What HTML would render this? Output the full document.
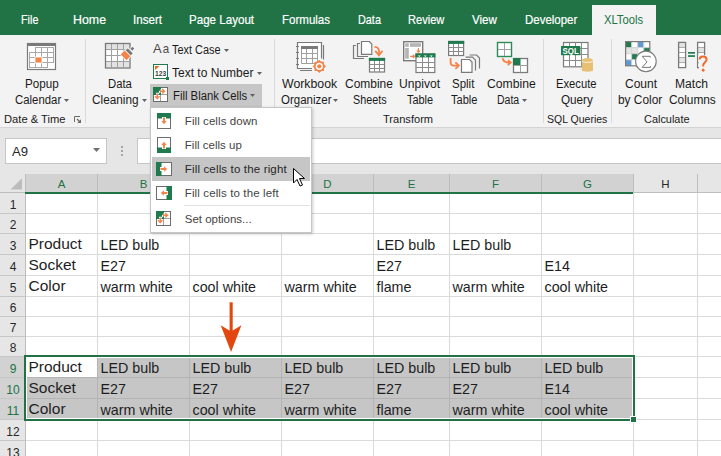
<!DOCTYPE html><html><head><meta charset="utf-8"><style>
html,body{margin:0;padding:0;width:721px;height:456px;overflow:hidden;background:#fff}
.b{position:absolute;box-sizing:content-box}
.t{position:absolute;font-family:"Liberation Sans",sans-serif;white-space:nowrap;transform-origin:0 0}
</style></head><body>
<div class="b" style="left:0;top:0;width:721px;height:35px;background:#217346"></div>
<div class="b" style="left:592px;top:5px;width:64px;height:30px;background:#f3f3f3"></div>
<div class="t" style="left:20.70px;top:13px;font-size:13.5px;line-height:13.5px;color:#ffffff;transform:scaleX(0.8000);-webkit-text-stroke:0.2px currentColor;">File</div>
<div class="t" style="left:73.00px;top:13px;font-size:13.5px;line-height:13.5px;color:#ffffff;transform:scaleX(0.9167);-webkit-text-stroke:0.2px currentColor;">Home</div>
<div class="t" style="left:133.00px;top:13px;font-size:13.5px;line-height:13.5px;color:#ffffff;transform:scaleX(0.8593);-webkit-text-stroke:0.2px currentColor;">Insert</div>
<div class="t" style="left:189.00px;top:13px;font-size:13.5px;line-height:13.5px;color:#ffffff;transform:scaleX(0.8581);-webkit-text-stroke:0.2px currentColor;">Page Layout</div>
<div class="t" style="left:282.00px;top:13px;font-size:13.5px;line-height:13.5px;color:#ffffff;transform:scaleX(0.8533);-webkit-text-stroke:0.2px currentColor;">Formulas</div>
<div class="t" style="left:358.00px;top:13px;font-size:13.5px;line-height:13.5px;color:#ffffff;transform:scaleX(0.8035);-webkit-text-stroke:0.2px currentColor;">Data</div>
<div class="t" style="left:408.40px;top:13px;font-size:13.5px;line-height:13.5px;color:#ffffff;transform:scaleX(0.8203);-webkit-text-stroke:0.2px currentColor;">Review</div>
<div class="t" style="left:472.00px;top:13px;font-size:13.5px;line-height:13.5px;color:#ffffff;transform:scaleX(0.8584);-webkit-text-stroke:0.2px currentColor;">View</div>
<div class="t" style="left:524.70px;top:13px;font-size:13.5px;line-height:13.5px;color:#ffffff;transform:scaleX(0.8504);-webkit-text-stroke:0.2px currentColor;">Developer</div>
<div class="t" style="left:604.00px;top:13px;font-size:13.5px;line-height:13.5px;color:#217346;transform:scaleX(0.8298);">XLTools</div>
<div class="b" style="left:0;top:35px;width:721px;height:92px;background:#f3f3f3"></div>
<div class="b" style="left:85px;top:39px;width:1px;height:84px;background:#dadada"></div>
<div class="b" style="left:274px;top:39px;width:1px;height:84px;background:#dadada"></div>
<div class="b" style="left:543px;top:39px;width:1px;height:84px;background:#dadada"></div>
<div class="b" style="left:611px;top:39px;width:1px;height:84px;background:#dadada"></div>
<div class="b" style="left:150px;top:84px;width:112px;height:23px;background:#c6c6c6"></div>
<div class="t" style="left:24.60px;top:78px;font-size:12.5px;line-height:12.5px;color:#1a1a1a;transform:scaleX(0.9329);">Popup</div>
<div class="t" style="left:14.60px;top:94px;font-size:12.5px;line-height:12.5px;color:#1a1a1a;transform:scaleX(0.9103);">Calendar</div>
<div class="t" style="left:108.00px;top:78px;font-size:12.5px;line-height:12.5px;color:#1a1a1a;transform:scaleX(0.9057);">Data</div>
<div class="t" style="left:92.40px;top:94px;font-size:12.5px;line-height:12.5px;color:#1a1a1a;transform:scaleX(0.9438);">Cleaning</div>
<div class="t" style="left:172.30px;top:44px;font-size:12.5px;line-height:12.5px;color:#1a1a1a;transform:scaleX(0.8719);">Text Case</div>
<div class="t" style="left:172.30px;top:67px;font-size:12.5px;line-height:12.5px;color:#1a1a1a;transform:scaleX(0.9605);">Text to Number</div>
<div class="t" style="left:172.70px;top:90px;font-size:12.5px;line-height:12.5px;color:#1a1a1a;transform:scaleX(0.9049);">Fill Blank Cells</div>
<div class="t" style="left:282.00px;top:78px;font-size:12.5px;line-height:12.5px;color:#1a1a1a;transform:scaleX(0.9835);">Workbook</div>
<div class="t" style="left:280.50px;top:94px;font-size:12.5px;line-height:12.5px;color:#1a1a1a;transform:scaleX(0.9203);">Organizer</div>
<div class="t" style="left:344.60px;top:78px;font-size:12.5px;line-height:12.5px;color:#1a1a1a;transform:scaleX(0.9580);">Combine</div>
<div class="t" style="left:352.50px;top:94px;font-size:12.5px;line-height:12.5px;color:#1a1a1a;transform:scaleX(0.8617);">Sheets</div>
<div class="t" style="left:399.00px;top:78px;font-size:12.5px;line-height:12.5px;color:#1a1a1a;transform:scaleX(0.9676);">Unpivot</div>
<div class="t" style="left:407.00px;top:94px;font-size:12.5px;line-height:12.5px;color:#1a1a1a;transform:scaleX(0.8736);">Table</div>
<div class="t" style="left:452.40px;top:78px;font-size:12.5px;line-height:12.5px;color:#1a1a1a;transform:scaleX(0.9190);">Split</div>
<div class="t" style="left:451.00px;top:94px;font-size:12.5px;line-height:12.5px;color:#1a1a1a;transform:scaleX(0.8837);">Table</div>
<div class="t" style="left:487.40px;top:78px;font-size:12.5px;line-height:12.5px;color:#1a1a1a;transform:scaleX(0.9760);">Combine</div>
<div class="t" style="left:496.70px;top:94px;font-size:12.5px;line-height:12.5px;color:#1a1a1a;transform:scaleX(0.8415);">Data</div>
<div class="t" style="left:556.00px;top:78px;font-size:12.5px;line-height:12.5px;color:#1a1a1a;transform:scaleX(0.8975);">Execute</div>
<div class="t" style="left:561.00px;top:94px;font-size:12.5px;line-height:12.5px;color:#1a1a1a;transform:scaleX(0.9353);">Query</div>
<div class="t" style="left:624.60px;top:78px;font-size:12.5px;line-height:12.5px;color:#1a1a1a;transform:scaleX(0.9618);">Count</div>
<div class="t" style="left:618.30px;top:94px;font-size:12.5px;line-height:12.5px;color:#1a1a1a;transform:scaleX(0.9505);">by Color</div>
<div class="t" style="left:675.40px;top:78px;font-size:12.5px;line-height:12.5px;color:#1a1a1a;transform:scaleX(0.9676);">Match</div>
<div class="t" style="left:668.75px;top:94px;font-size:12.5px;line-height:12.5px;color:#1a1a1a;transform:scaleX(0.9489);">Columns</div>
<div class="t" style="left:3.75px;top:114px;font-size:11.5px;line-height:11.5px;color:#1a1a1a;transform:scaleX(0.9715);">Date &amp; Time</div>
<div class="t" style="left:383.30px;top:114px;font-size:11.5px;line-height:11.5px;color:#1a1a1a;transform:scaleX(0.9635);">Transform</div>
<div class="t" style="left:547.00px;top:114px;font-size:11.5px;line-height:11.5px;color:#1a1a1a;transform:scaleX(0.9136);">SQL Queries</div>
<div class="t" style="left:644.40px;top:114px;font-size:11.5px;line-height:11.5px;color:#1a1a1a;transform:scaleX(0.9500);">Calculate</div>
<svg class="b" style="left:0;top:0" width="721" height="130"><rect x="27.5" y="43.5" width="28" height="26" fill="#fff" stroke="#7a7a7a" stroke-width="1.2"/><rect x="27" y="43" width="29" height="3" fill="#7a7a7a"/><path d="M35 47.5H54 M29 52.5H54 M29 57.5H54 M29 62.5H54 M29 67.5H48 M29.5 52V68 M35.5 47V68 M41.5 47V68 M47.5 47V68 M53.5 47V63" stroke="#a8a8a8" stroke-width="1" fill="none"/><rect x="35" y="57" width="7" height="6" fill="#f4844a" stroke="#fff" stroke-width="0.8"/><rect x="105.5" y="43.5" width="24" height="6" fill="#e2e2e2"/><rect x="105.5" y="61.5" width="24" height="6" fill="#e2e2e2"/><rect x="105.5" y="49.5" width="24" height="12" fill="#fff"/><path d="M111.5 44V67 M117.5 44V67 M123.5 44V67 M106 49.5H129 M106 55.5H129 M106 61.5H129" stroke="#a0a0a0" stroke-width="1" fill="none"/><rect x="105.5" y="43.5" width="24.5" height="24.5" fill="none" stroke="#7a7a7a" stroke-width="1.3"/><g transform="translate(125.6,55.4) rotate(-45)" stroke="#fff" stroke-width="1.4"><rect x="-2.8" y="-4.2" width="5.6" height="8.2" fill="#fff"/><rect x="3.6" y="-3.6" width="3" height="7.2" fill="#fff"/><rect x="8" y="-1.4" width="3" height="2.8" fill="#fff"/></g><g transform="translate(125.6,55.4) rotate(-45)"><rect x="-2.8" y="-4.2" width="5.6" height="8.2" fill="#f4844a"/><rect x="3.6" y="-3.6" width="3" height="7.2" fill="#7a7a7a"/><rect x="8" y="-1.4" width="3" height="2.8" fill="#7a7a7a"/></g><text x="152.9" y="52.7" font-family="Liberation Sans" font-size="13.3" fill="#4a4a4a" textLength="8.6" lengthAdjust="spacingAndGlyphs">A</text><text x="162.7" y="52.7" font-family="Liberation Sans" font-size="13.3" fill="#4a4a4a" textLength="6.4" lengthAdjust="spacingAndGlyphs">a</text><rect x="153.5" y="64.5" width="14" height="14" fill="#fff" stroke="#1f7b4d" stroke-width="1"/><polygon points="155,66 159.5,66 155,70" fill="#f26522"/><text x="155" y="75.8" font-family="Liberation Sans" font-weight="bold" font-size="6.8" fill="#404040" textLength="11.2" lengthAdjust="spacingAndGlyphs">123</text><rect x="166" y="77" width="3" height="3" fill="#1f7b4d"/><rect x="297.5" y="42.5" width="24" height="26" fill="#fff"/><path d="M312 68.5H297.5V42.5H321.5V58.5 M323.5 45V59.5 M300 70.5H312 M296 46.5H299 M296 52.5H299 M296 58.5H299 M296 64.5H299" stroke="#7a7a7a" stroke-width="1.2" fill="none"/><rect x="301" y="46" width="17" height="3" fill="#7a7a7a"/><path d="M301.5 49V63.5H317.5V49 M306.5 49V63 M312.5 49V63 M302 53.5H317 M302 58.5H317" stroke="#a0a0a0" stroke-width="1" fill="none"/><circle cx="319.3" cy="66.3" r="5.4" fill="#f4844a"/><polygon points="325.90,66.30 323.92,68.21 323.97,70.97 321.21,70.92 319.30,72.90 317.39,70.92 314.63,70.97 314.68,68.21 312.70,66.30 314.68,64.39 314.63,61.63 317.39,61.68 319.30,59.70 321.21,61.68 323.97,61.63 323.92,64.39" fill="#f4844a"/><circle cx="319.3" cy="66.3" r="3.6" fill="#fff"/><circle cx="319.3" cy="66.3" r="2.1" fill="#f4844a"/><path d="M356 45.5H353.5V58.5H364 M360 43.5H357.5V56.5H368" stroke="#7a7a7a" stroke-width="1.2" fill="none"/><path d="M361.5 41.5H369.3L371.8 44.0V54.3H361.5Z" fill="#fff" stroke="#7a7a7a" stroke-width="1.2"/><path d="M374.5 46.8C378 46.8 379.5 49 379 54.5" stroke="#f4844a" stroke-width="1.8" fill="none"/><path d="M375.2 50.8L379 55.3L382.6 50.8" stroke="#f4844a" stroke-width="1.8" fill="none"/><rect x="369.5" y="58.5" width="15" height="13.5" fill="#fff" stroke="#7a7a7a" stroke-width="1.2"/><path d="M374.5 58.5V72.0M379.5 58.5V72.0M369.5 64.5H384.5M369.5 68.5H384.5" stroke="#8c8c8c" stroke-width="1" fill="none"/><rect x="368.9" y="57.9" width="16.2" height="3" fill="#1f7b4d"/><rect x="403.7" y="41.7" width="19" height="19" fill="#fff" stroke="#7a7a7a" stroke-width="1.4"/><rect x="405.2" y="43.2" width="3.6" height="3.6" fill="#b4b4b4"/><rect x="410" y="43.2" width="11" height="3.6" fill="#b4b4b4"/><rect x="405.2" y="48" width="3.6" height="10.7" fill="#b4b4b4"/><path d="M418.4 48V52 M416.8 50.6L418.4 52.4L420 50.6 M410 56.3H414.5 M412.8 54.6L414.7 56.3L412.8 58" stroke="#f4844a" stroke-width="1.2" fill="none"/><rect x="416" y="54" width="18.8" height="18.5" fill="#fff" stroke="#7a7a7a" stroke-width="1.2"/><path d="M422.5 54V72.5M428.5 54V72.5M416 62.5H434.8M416 67.5H434.8" stroke="#8c8c8c" stroke-width="1" fill="none"/><rect x="415.4" y="53.4" width="20.0" height="4" fill="#1f7b4d"/><polygon points="417.8,55.5 420.8,55.5 419.3,57" fill="#fff"/><polygon points="423.8,55.5 426.8,55.5 425.3,57" fill="#fff"/><polygon points="429.8,55.5 432.8,55.5 431.3,57" fill="#fff"/><rect x="448.6" y="41.5" width="15" height="14" fill="#fff" stroke="#7a7a7a" stroke-width="1.2"/><path d="M453.5 41.5V55.5M458.5 41.5V55.5M448.6 47.5H463.6M448.6 51.5H463.6" stroke="#8c8c8c" stroke-width="1" fill="none"/><rect x="448.0" y="40.9" width="16.2" height="3" fill="#1f7b4d"/><path d="M469.6 55H476.5L479.5 58V68.5" stroke="#7a7a7a" stroke-width="1.2" fill="none"/><path d="M465.6 57.2H472.5L475.5 60.2V70.5" stroke="#7a7a7a" stroke-width="1.2" fill="none"/><path d="M461.5 59.5H469.5L472.0 62.0V72.3H461.5Z" fill="#fff" stroke="#7a7a7a" stroke-width="1.2"/><path d="M450.6 58V62.5C450.6 64.5 452 65.6 454 65.6H459" stroke="#f4844a" stroke-width="1.8" fill="none"/><path d="M455.4 62.3L458.8 65.6L455.4 68.9" stroke="#f4844a" stroke-width="1.8" fill="none"/><rect x="497.5" y="42.5" width="14" height="14" fill="#fff" stroke="#2e8b57" stroke-width="1.4"/><path d="M504.5 43V56 M498 49.5H511" stroke="#a0a0a0" stroke-width="1"/><rect x="513.5" y="58.5" width="14" height="14" fill="#fff" stroke="#7a7a7a" stroke-width="1.3"/><rect x="513" y="58" width="7.5" height="7.5" fill="#1f7b4d"/><path d="M520.5 65V72 M513.5 65.5H527.5" stroke="#a0a0a0" stroke-width="1"/><path d="M502.6 58.2C503 61.5 505 62.8 510.5 62.6 M508 60.2L510.8 62.6L507.8 65" stroke="#f4844a" stroke-width="1.8" fill="none"/><rect x="563.5" y="42.5" width="24.5" height="24.3" fill="#fff" stroke="#7a7a7a" stroke-width="1.2"/><path d="M569.5 42.5V66.8M575.5 42.5V66.8M581.5 42.5V66.8M563.5 48.5H588.0M563.5 54.5H588.0M563.5 60.5H588.0" stroke="#8c8c8c" stroke-width="1" fill="none"/><rect x="561" y="46" width="19.4" height="9.2" fill="#1f7b4d"/><text x="562.6" y="54" font-family="Liberation Sans" font-weight="bold" font-size="8.8" fill="#fff" textLength="16.2" lengthAdjust="spacingAndGlyphs">SQL</text><path d="M581.8 60.2V70.5C581.8 72 593 72 593 70.5V60.2Z" fill="#e6c174"/><ellipse cx="587.4" cy="60.2" rx="5.6" ry="2.2" fill="#e6c174"/><path d="M581.9 61.2C583.5 62.8 591.3 62.8 592.9 61.2" stroke="#fff" stroke-width="0.8" fill="none"/><rect x="625.60" y="41.60" width="6.05" height="6.05" fill="#1f7b4d"/><rect x="631.65" y="41.60" width="6.05" height="6.05" fill="#fff"/><rect x="637.70" y="41.60" width="6.05" height="6.05" fill="#5b9bd5"/><rect x="643.75" y="41.60" width="6.05" height="6.05" fill="#fff"/><rect x="625.60" y="47.65" width="6.05" height="6.05" fill="#e4e4e4"/><rect x="631.65" y="47.65" width="6.05" height="6.05" fill="#e4e4e4"/><rect x="637.70" y="47.65" width="6.05" height="6.05" fill="#fff"/><rect x="643.75" y="47.65" width="6.05" height="6.05" fill="#1f7b4d"/><rect x="625.60" y="53.70" width="6.05" height="6.05" fill="#fff"/><rect x="631.65" y="53.70" width="6.05" height="6.05" fill="#1f7b4d"/><rect x="637.70" y="53.70" width="6.05" height="6.05" fill="#fff"/><rect x="643.75" y="53.70" width="6.05" height="6.05" fill="#fff"/><rect x="625.60" y="59.75" width="6.05" height="6.05" fill="#5b9bd5"/><rect x="631.65" y="59.75" width="6.05" height="6.05" fill="#fff"/><rect x="637.70" y="59.75" width="6.05" height="6.05" fill="#fff"/><rect x="643.75" y="59.75" width="6.05" height="6.05" fill="#fff"/><path d="M631.65 41.6V65.6 M637.70 41.6V65.6 M643.75 41.6V65.6 M625.6 47.65H649.6 M625.6 53.70H649.6 M625.6 59.75H649.6" stroke="#d0d0d0" stroke-width="0.9" fill="none"/><rect x="625.6" y="41.6" width="24.2" height="24.2" fill="none" stroke="#7a7a7a" stroke-width="1.2"/><circle cx="645.9" cy="61.4" r="10.3" fill="#fff" stroke="#7a7a7a" stroke-width="1.1"/><path d="M650.2 57.6V56.3H642.2L647 61.9L642.2 67.4H650.4V66" stroke="#6a6a6a" stroke-width="0.9" fill="none"/><rect x="678.6" y="42.40" width="7" height="5.05" fill="#e4e4e4"/><rect x="678.6" y="47.45" width="7" height="5.05" fill="#fff"/><rect x="678.6" y="52.50" width="7" height="5.05" fill="#fff"/><rect x="678.6" y="57.55" width="7" height="5.05" fill="#e4e4e4"/><rect x="678.6" y="62.60" width="7" height="5.05" fill="#fff"/><path d="M678.6 47.45H685.6 M678.6 52.5H685.6 M678.6 57.55H685.6 M678.6 62.6H685.6" stroke="#a0a0a0" stroke-width="0.9"/><rect x="678.6" y="42.4" width="7" height="25.2" fill="none" stroke="#7a7a7a" stroke-width="1.3"/><rect x="697.6" y="42.40" width="7" height="5.05" fill="#fff"/><rect x="697.6" y="47.45" width="7" height="5.05" fill="#e4e4e4"/><rect x="697.6" y="52.50" width="7" height="5.05" fill="#fff"/><rect x="697.6" y="57.55" width="7" height="5.05" fill="#fff"/><rect x="697.6" y="62.60" width="7" height="5.05" fill="#fff"/><path d="M697.6 47.45H704.6 M697.6 52.5H704.6 M697.6 57.55H704.6 M697.6 62.6H704.6" stroke="#a0a0a0" stroke-width="0.9"/><rect x="697.6" y="42.4" width="7" height="25.2" fill="none" stroke="#7a7a7a" stroke-width="1.3"/><rect x="688" y="52" width="7" height="1.7" fill="#1f7b4d"/><rect x="688" y="55.2" width="7" height="1.7" fill="#1f7b4d"/><rect x="698.2" y="55.2" width="9.6" height="17" fill="#f3f3f3"/><path d="M699.6 59.6C699.6 57.3 701.2 56.6 703.1 56.6C705.1 56.6 706.6 57.8 706.6 59.6C706.6 62 703.6 62.5 703.2 65V66.6" stroke="#f26a2a" stroke-width="2" fill="none"/><rect x="701.9" y="68.9" width="2.6" height="2.6" fill="#f26a2a" transform="rotate(45 703.2 70.2)"/><path d="M697.6 62.6H698.5 M697.6 67.6H699" stroke="#7a7a7a" stroke-width="1.3"/><path d="M74.5 122V116.5H80" stroke="#6a6a6a" stroke-width="1" fill="none"/><path d="M77 119L80 122" stroke="#6a6a6a" stroke-width="1.2"/><polygon points="81,119.3 81,123 77.3,123" fill="#6a6a6a"/><rect x="153.5" y="87.5" width="14" height="14" fill="#fff" stroke="#6d6d6d" stroke-width="1"/><path d="M160.5 88V101 M154 94.5H167" stroke="#a0a0a0" stroke-width="1"/><polygon points="153,87 161,87 161,89 160,89 160,90.8 159,90.8 159,92.7 156,92.7 156,95 153,95" fill="#1f7b4d"/><rect x="159.1" y="92.9" width="1.9" height="2.1" fill="#1f7b4d"/><path d="M160 91.25H164.3 M162.2 89.1L164.5 91.25L162.2 93.4 M157.3 93.6V98.2 M155.1 96.2L157.3 98.4L159.5 96.2" stroke="#f4844a" stroke-width="1.4" fill="none"/></svg>
<svg class="b" style="left:64px;top:98.5px" width="5" height="4"><polygon points="0,0 5,0 2.5,3.0" fill="#606060"/></svg>
<svg class="b" style="left:142px;top:98.5px" width="5" height="4"><polygon points="0,0 5,0 2.5,3.0" fill="#606060"/></svg>
<svg class="b" style="left:224px;top:48.5px" width="5" height="4"><polygon points="0,0 5,0 2.5,3.0" fill="#606060"/></svg>
<svg class="b" style="left:257px;top:71.5px" width="5" height="4"><polygon points="0,0 5,0 2.5,3.0" fill="#606060"/></svg>
<svg class="b" style="left:250px;top:94px" width="5" height="4"><polygon points="0,0 5,0 2.5,3.0" fill="#606060"/></svg>
<svg class="b" style="left:333px;top:98.5px" width="5" height="4"><polygon points="0,0 5,0 2.5,3.0" fill="#606060"/></svg>
<svg class="b" style="left:522px;top:98.5px" width="5" height="4"><polygon points="0,0 5,0 2.5,3.0" fill="#606060"/></svg>
<div class="b" style="left:0;top:127px;width:721px;height:47px;background:#e6e6e6"></div>
<div class="b" style="left:0;top:127px;width:721px;height:1px;background:#d4d4d4"></div>
<div class="b" style="left:5px;top:138px;width:100px;height:24px;background:#fff;border:1px solid #c6c6c6"></div>
<div class="t" style="left:12.00px;top:145px;font-size:13px;line-height:13px;color:#262626;transform:scaleX(1.0079);">A9</div>
<svg class="b" style="left:93px;top:148px" width="7" height="4"><polygon points="0,0 7,0 3.5,4.0" fill="#707070"/></svg>
<div class="b" style="left:121px;top:146px;width:2px;height:2px;background:#a6a6a6"></div>
<div class="b" style="left:121px;top:150px;width:2px;height:2px;background:#a6a6a6"></div>
<div class="b" style="left:121px;top:154px;width:2px;height:2px;background:#a6a6a6"></div>
<div class="b" style="left:137px;top:138px;width:590px;height:24px;background:#fff;border:1px solid #c6c6c6"></div>
<div class="b" style="left:0;top:174px;width:721px;height:282px;background:#fff"></div>
<div class="b" style="left:0;top:174px;width:721px;height:19px;background:#e6e6e6"></div>
<div class="b" style="left:0;top:174px;width:25px;height:282px;background:#e6e6e6"></div>
<div class="b" style="left:25px;top:174px;width:608px;height:19px;background:#d2d2d2"></div>
<div class="b" style="left:0;top:356px;width:25px;height:63px;background:#d2d2d2"></div>
<svg class="b" style="left:0;top:174px" width="25" height="19"><polygon points="10.5,15.5 22,15.5 22,4.3" fill="#bcbcbc"/></svg>
<div class="b" style="left:97px;top:193px;width:1px;height:263px;background:#dadada"></div>
<div class="b" style="left:97px;top:174px;width:1px;height:18px;background:#bdbdbd"></div>
<div class="b" style="left:189px;top:193px;width:1px;height:263px;background:#dadada"></div>
<div class="b" style="left:189px;top:174px;width:1px;height:18px;background:#bdbdbd"></div>
<div class="b" style="left:281px;top:193px;width:1px;height:263px;background:#dadada"></div>
<div class="b" style="left:281px;top:174px;width:1px;height:18px;background:#bdbdbd"></div>
<div class="b" style="left:373px;top:193px;width:1px;height:263px;background:#dadada"></div>
<div class="b" style="left:373px;top:174px;width:1px;height:18px;background:#bdbdbd"></div>
<div class="b" style="left:449px;top:193px;width:1px;height:263px;background:#dadada"></div>
<div class="b" style="left:449px;top:174px;width:1px;height:18px;background:#bdbdbd"></div>
<div class="b" style="left:541px;top:193px;width:1px;height:263px;background:#dadada"></div>
<div class="b" style="left:541px;top:174px;width:1px;height:18px;background:#bdbdbd"></div>
<div class="b" style="left:633px;top:193px;width:1px;height:263px;background:#dadada"></div>
<div class="b" style="left:633px;top:174px;width:1px;height:18px;background:#bdbdbd"></div>
<div class="b" style="left:697px;top:193px;width:1px;height:263px;background:#dadada"></div>
<div class="b" style="left:697px;top:174px;width:1px;height:18px;background:#bdbdbd"></div>
<div class="b" style="left:789px;top:193px;width:1px;height:263px;background:#dadada"></div>
<div class="b" style="left:789px;top:174px;width:1px;height:18px;background:#bdbdbd"></div>
<div class="b" style="left:25px;top:213px;width:696px;height:1px;background:#dadada"></div>
<div class="b" style="left:0;top:213px;width:25px;height:1px;background:#c6c6c6"></div>
<div class="b" style="left:25px;top:233px;width:696px;height:1px;background:#dadada"></div>
<div class="b" style="left:0;top:233px;width:25px;height:1px;background:#c6c6c6"></div>
<div class="b" style="left:25px;top:254px;width:696px;height:1px;background:#dadada"></div>
<div class="b" style="left:0;top:254px;width:25px;height:1px;background:#c6c6c6"></div>
<div class="b" style="left:25px;top:275px;width:696px;height:1px;background:#dadada"></div>
<div class="b" style="left:0;top:275px;width:25px;height:1px;background:#c6c6c6"></div>
<div class="b" style="left:25px;top:296px;width:696px;height:1px;background:#dadada"></div>
<div class="b" style="left:0;top:296px;width:25px;height:1px;background:#c6c6c6"></div>
<div class="b" style="left:25px;top:316px;width:696px;height:1px;background:#dadada"></div>
<div class="b" style="left:0;top:316px;width:25px;height:1px;background:#c6c6c6"></div>
<div class="b" style="left:25px;top:336px;width:696px;height:1px;background:#dadada"></div>
<div class="b" style="left:0;top:336px;width:25px;height:1px;background:#c6c6c6"></div>
<div class="b" style="left:25px;top:356px;width:696px;height:1px;background:#dadada"></div>
<div class="b" style="left:0;top:356px;width:25px;height:1px;background:#c6c6c6"></div>
<div class="b" style="left:25px;top:377px;width:696px;height:1px;background:#dadada"></div>
<div class="b" style="left:0;top:377px;width:25px;height:1px;background:#c6c6c6"></div>
<div class="b" style="left:25px;top:398px;width:696px;height:1px;background:#dadada"></div>
<div class="b" style="left:0;top:398px;width:25px;height:1px;background:#c6c6c6"></div>
<div class="b" style="left:25px;top:419px;width:696px;height:1px;background:#dadada"></div>
<div class="b" style="left:0;top:419px;width:25px;height:1px;background:#c6c6c6"></div>
<div class="b" style="left:25px;top:440px;width:696px;height:1px;background:#dadada"></div>
<div class="b" style="left:0;top:440px;width:25px;height:1px;background:#c6c6c6"></div>
<div class="b" style="left:25px;top:461px;width:696px;height:1px;background:#dadada"></div>
<div class="b" style="left:0;top:461px;width:25px;height:1px;background:#c6c6c6"></div>
<div class="b" style="left:25px;top:174px;width:1px;height:282px;background:#bdbdbd"></div>
<div class="b" style="left:0;top:192px;width:25px;height:1px;background:#bdbdbd"></div>
<div class="b" style="left:25px;top:192px;width:608px;height:2px;background:#217346"></div>
<div class="b" style="left:633px;top:192px;width:88px;height:1px;background:#bdbdbd"></div>
<div class="t" style="left:41.5px;top:179px;width:40px;text-align:center;font-size:11.5px;line-height:11.5px;color:#217346">A</div>
<div class="t" style="left:123.5px;top:179px;width:40px;text-align:center;font-size:11.5px;line-height:11.5px;color:#217346">B</div>
<div class="t" style="left:215.5px;top:179px;width:40px;text-align:center;font-size:11.5px;line-height:11.5px;color:#217346">C</div>
<div class="t" style="left:307.5px;top:179px;width:40px;text-align:center;font-size:11.5px;line-height:11.5px;color:#217346">D</div>
<div class="t" style="left:391.5px;top:179px;width:40px;text-align:center;font-size:11.5px;line-height:11.5px;color:#217346">E</div>
<div class="t" style="left:475.5px;top:179px;width:40px;text-align:center;font-size:11.5px;line-height:11.5px;color:#217346">F</div>
<div class="t" style="left:567.5px;top:179px;width:40px;text-align:center;font-size:11.5px;line-height:11.5px;color:#217346">G</div>
<div class="t" style="left:645.5px;top:179px;width:40px;text-align:center;font-size:11.5px;line-height:11.5px;color:#262626">H</div>
<div class="t" style="left:723.5px;top:179px;width:40px;text-align:center;font-size:11.5px;line-height:11.5px;color:#262626">I</div>
<div class="t" style="left:0.5px;top:199px;width:25px;text-align:center;font-size:12px;line-height:12px;color:#262626">1</div>
<div class="t" style="left:0.5px;top:219px;width:25px;text-align:center;font-size:12px;line-height:12px;color:#262626">2</div>
<div class="t" style="left:0.5px;top:240px;width:25px;text-align:center;font-size:12px;line-height:12px;color:#262626">3</div>
<div class="t" style="left:0.5px;top:261px;width:25px;text-align:center;font-size:12px;line-height:12px;color:#262626">4</div>
<div class="t" style="left:0.5px;top:282px;width:25px;text-align:center;font-size:12px;line-height:12px;color:#262626">5</div>
<div class="t" style="left:0.5px;top:302px;width:25px;text-align:center;font-size:12px;line-height:12px;color:#262626">6</div>
<div class="t" style="left:0.5px;top:322px;width:25px;text-align:center;font-size:12px;line-height:12px;color:#262626">7</div>
<div class="t" style="left:0.5px;top:342px;width:25px;text-align:center;font-size:12px;line-height:12px;color:#262626">8</div>
<div class="t" style="left:0.5px;top:363px;width:25px;text-align:center;font-size:12px;line-height:12px;color:#217346">9</div>
<div class="t" style="left:0.5px;top:384px;width:25px;text-align:center;font-size:12px;line-height:12px;color:#217346">10</div>
<div class="t" style="left:0.5px;top:405px;width:25px;text-align:center;font-size:12px;line-height:12px;color:#217346">11</div>
<div class="t" style="left:0.5px;top:426px;width:25px;text-align:center;font-size:12px;line-height:12px;color:#262626">12</div>
<div class="t" style="left:0.5px;top:447px;width:25px;text-align:center;font-size:12px;line-height:12px;color:#262626">13</div>
<div class="b" style="left:26px;top:357px;width:607px;height:62px;background:#fff"></div>
<div class="b" style="left:27px;top:358px;width:605px;height:60px;background:#c6c6c6"></div>
<div class="b" style="left:27px;top:358px;width:70px;height:19px;background:#fff"></div>
<div class="b" style="left:97px;top:358px;width:1px;height:60px;background:#b4b4b4"></div>
<div class="b" style="left:189px;top:358px;width:1px;height:60px;background:#b4b4b4"></div>
<div class="b" style="left:281px;top:358px;width:1px;height:60px;background:#b4b4b4"></div>
<div class="b" style="left:373px;top:358px;width:1px;height:60px;background:#b4b4b4"></div>
<div class="b" style="left:449px;top:358px;width:1px;height:60px;background:#b4b4b4"></div>
<div class="b" style="left:541px;top:358px;width:1px;height:60px;background:#b4b4b4"></div>
<div class="b" style="left:27px;top:377px;width:605px;height:1px;background:#b4b4b4"></div>
<div class="b" style="left:27px;top:398px;width:605px;height:1px;background:#b4b4b4"></div>
<div class="b" style="left:24px;top:355px;width:607px;height:62px;border:2px solid #217346;"></div>
<div class="b" style="left:630px;top:416px;width:5px;height:5px;background:#217346;border:1px solid #fff"></div>
<div class="t" style="left:28.5px;top:236px;font-size:15.5px;line-height:15.5px;color:#1e1e1e">Product</div>
<div class="t" style="left:100.5px;top:238px;font-size:14.3px;line-height:14.3px;color:#1e1e1e">LED bulb</div>
<div class="t" style="left:376.5px;top:238px;font-size:14.3px;line-height:14.3px;color:#1e1e1e">LED bulb</div>
<div class="t" style="left:452.5px;top:238px;font-size:14.3px;line-height:14.3px;color:#1e1e1e">LED bulb</div>
<div class="t" style="left:28.5px;top:257px;font-size:15.5px;line-height:15.5px;color:#1e1e1e">Socket</div>
<div class="t" style="left:100.5px;top:259px;font-size:14.3px;line-height:14.3px;color:#1e1e1e">E27</div>
<div class="t" style="left:376.5px;top:259px;font-size:14.3px;line-height:14.3px;color:#1e1e1e">E27</div>
<div class="t" style="left:544.5px;top:259px;font-size:14.3px;line-height:14.3px;color:#1e1e1e">E14</div>
<div class="t" style="left:28.5px;top:278px;font-size:15.5px;line-height:15.5px;color:#1e1e1e">Color</div>
<div class="t" style="left:100.5px;top:280px;font-size:14.3px;line-height:14.3px;color:#1e1e1e">warm white</div>
<div class="t" style="left:192.5px;top:280px;font-size:14.3px;line-height:14.3px;color:#1e1e1e">cool white</div>
<div class="t" style="left:284.5px;top:280px;font-size:14.3px;line-height:14.3px;color:#1e1e1e">warm white</div>
<div class="t" style="left:376.5px;top:280px;font-size:14.3px;line-height:14.3px;color:#1e1e1e">flame</div>
<div class="t" style="left:452.5px;top:280px;font-size:14.3px;line-height:14.3px;color:#1e1e1e">warm white</div>
<div class="t" style="left:544.5px;top:280px;font-size:14.3px;line-height:14.3px;color:#1e1e1e">cool white</div>
<div class="t" style="left:28.5px;top:359px;font-size:15.5px;line-height:15.5px;color:#1e1e1e">Product</div>
<div class="t" style="left:100.5px;top:361px;font-size:14.3px;line-height:14.3px;color:#1e1e1e">LED bulb</div>
<div class="t" style="left:192.5px;top:361px;font-size:14.3px;line-height:14.3px;color:#1e1e1e">LED bulb</div>
<div class="t" style="left:284.5px;top:361px;font-size:14.3px;line-height:14.3px;color:#1e1e1e">LED bulb</div>
<div class="t" style="left:376.5px;top:361px;font-size:14.3px;line-height:14.3px;color:#1e1e1e">LED bulb</div>
<div class="t" style="left:452.5px;top:361px;font-size:14.3px;line-height:14.3px;color:#1e1e1e">LED bulb</div>
<div class="t" style="left:544.5px;top:361px;font-size:14.3px;line-height:14.3px;color:#1e1e1e">LED bulb</div>
<div class="t" style="left:28.5px;top:380px;font-size:15.5px;line-height:15.5px;color:#1e1e1e">Socket</div>
<div class="t" style="left:100.5px;top:382px;font-size:14.3px;line-height:14.3px;color:#1e1e1e">E27</div>
<div class="t" style="left:192.5px;top:382px;font-size:14.3px;line-height:14.3px;color:#1e1e1e">E27</div>
<div class="t" style="left:284.5px;top:382px;font-size:14.3px;line-height:14.3px;color:#1e1e1e">E27</div>
<div class="t" style="left:376.5px;top:382px;font-size:14.3px;line-height:14.3px;color:#1e1e1e">E27</div>
<div class="t" style="left:452.5px;top:382px;font-size:14.3px;line-height:14.3px;color:#1e1e1e">E27</div>
<div class="t" style="left:544.5px;top:382px;font-size:14.3px;line-height:14.3px;color:#1e1e1e">E14</div>
<div class="t" style="left:28.5px;top:401px;font-size:15.5px;line-height:15.5px;color:#1e1e1e">Color</div>
<div class="t" style="left:100.5px;top:403px;font-size:14.3px;line-height:14.3px;color:#1e1e1e">warm white</div>
<div class="t" style="left:192.5px;top:403px;font-size:14.3px;line-height:14.3px;color:#1e1e1e">cool white</div>
<div class="t" style="left:284.5px;top:403px;font-size:14.3px;line-height:14.3px;color:#1e1e1e">warm white</div>
<div class="t" style="left:376.5px;top:403px;font-size:14.3px;line-height:14.3px;color:#1e1e1e">flame</div>
<div class="t" style="left:452.5px;top:403px;font-size:14.3px;line-height:14.3px;color:#1e1e1e">warm white</div>
<div class="t" style="left:544.5px;top:403px;font-size:14.3px;line-height:14.3px;color:#1e1e1e">cool white</div>
<svg class="b" style="left:215px;top:300px" width="32" height="56"><rect x="14.6" y="2.3" width="3.1" height="30" fill="#e2470f"/><polygon points="5.7,25.3 16.1,31.4 26.4,25.3 16.1,52.1" fill="#e2470f"/></svg>
<div class="b" style="left:150px;top:107px;width:160px;height:124px;background:#fff;border:1px solid #c6c6c6;box-shadow:1px 1px 3px rgba(0,0,0,0.2)"></div>
<div class="b" style="left:152px;top:157px;width:158px;height:24px;background:#c6c6c6"></div>
<div class="b" style="left:184px;top:205px;width:126px;height:1px;background:#e1e1e1"></div>
<div class="t" style="left:184.80px;top:116px;font-size:11.5px;line-height:11.5px;color:#444;letter-spacing:0.077px;">Fill cells down</div>
<div class="t" style="left:184.80px;top:140px;font-size:11.5px;line-height:11.5px;color:#444;letter-spacing:0.010px;">Fill cells up</div>
<div class="t" style="left:184.80px;top:164px;font-size:11.5px;line-height:11.5px;color:#262626;letter-spacing:0.156px;">Fill cells to the right</div>
<div class="t" style="left:184.80px;top:188px;font-size:11.5px;line-height:11.5px;color:#444;letter-spacing:0.120px;">Fill cells to the left</div>
<div class="t" style="left:184.80px;top:214px;font-size:11.5px;line-height:11.5px;color:#444;letter-spacing:-0.025px;">Set options...</div>
<svg class="b" style="left:0;top:0" width="721" height="240"><rect x="157.5" y="113.5" width="13" height="15" fill="#fff" stroke="#6d6d6d" stroke-width="1"/><path d="M157 113H171V118.5H166V117H162V118.5H157Z" fill="#1f7b4d"/><path d="M164 117.5V121.5" stroke="#f4844a" stroke-width="2" fill="none"/><polygon points="161.3,121 166.7,121 164,124.2" fill="#f4844a"/><rect x="157.5" y="137.5" width="13" height="15" fill="#fff" stroke="#6d6d6d" stroke-width="1"/><path d="M157 153H171V147.5H166V149H162V147.5H157Z" fill="#1f7b4d"/><path d="M164 148.5V144.5" stroke="#f4844a" stroke-width="2" fill="none"/><polygon points="161.3,145 166.7,145 164,141.8" fill="#f4844a"/><rect x="156.5" y="162.5" width="15" height="13" fill="#fff" stroke="#6d6d6d" stroke-width="1"/><path d="M156 162V176H161.5V171H160V167H161.5V162Z" fill="#1f7b4d"/><path d="M160.5 169H164.5" stroke="#f4844a" stroke-width="2" fill="none"/><polygon points="164,166.3 164,171.7 167.2,169" fill="#f4844a"/><rect x="156.5" y="186.5" width="15" height="13" fill="#fff" stroke="#6d6d6d" stroke-width="1"/><path d="M172 186V200H166.5V195H168V191H166.5V186Z" fill="#1f7b4d"/><path d="M167.5 193H163.5" stroke="#f4844a" stroke-width="2" fill="none"/><polygon points="164,190.3 164,195.7 160.8,193" fill="#f4844a"/><rect x="156.5" y="211.5" width="14" height="14" fill="#fff" stroke="#6d6d6d" stroke-width="1"/><path d="M163.5 212V225 M157 218.5H170" stroke="#a0a0a0" stroke-width="1"/><polygon points="156,211 164,211 164,213 163,213 163,214.8 162,214.8 162,216.7 159,216.7 159,219 156,219" fill="#1f7b4d"/><rect x="162.1" y="216.9" width="1.9" height="2.1" fill="#1f7b4d"/><path d="M163 215.25H167.3 M165.2 213.1L167.5 215.25L165.2 217.4 M160.3 217.6V222.2 M158.1 220.2L160.3 222.4L162.5 220.2" stroke="#f4844a" stroke-width="1.4" fill="none"/></svg>
<svg class="b" style="left:292px;top:167px" width="16" height="22"><path d="M1.5,1.5 L1.5,16 L5,12.5 L8,19 L10.5,18 L7.5,11.5 L12.5,11.5 Z" fill="#fff" stroke="#000" stroke-width="1"/></svg>
</body></html>
